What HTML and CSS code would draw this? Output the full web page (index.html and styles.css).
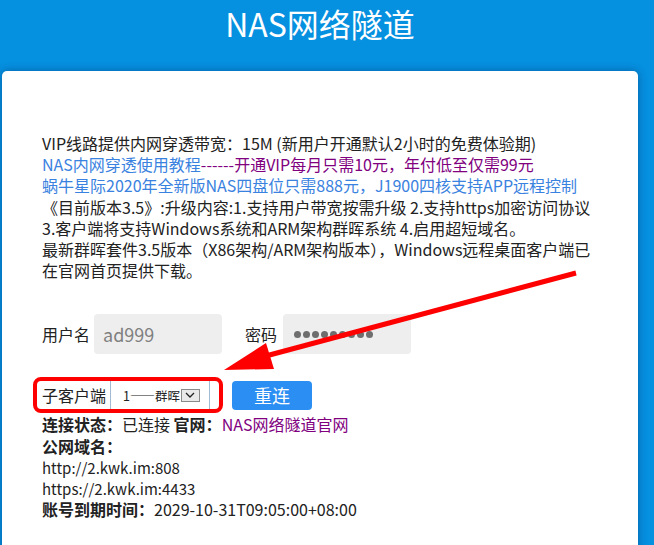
FILE: index.html
```html
<!DOCTYPE html>
<html lang="zh-CN">

<head>
    <meta charset="UTF-8">
    <meta name="viewport" content="width=device-width, initial-scale=1.0">
    <title>NAS网络隧道</title>
    <link rel="stylesheet" href="styles.css">
</head>

<body>
    <h1 class="title">NAS网络隧道</h1>

    <div class="card">
        <div class="notice">
            VIP线路提供内网穿透带宽：15M (新用户开通默认2小时的免费体验期)<br>
            <a class="blue" href="#">NAS内网穿透使用教程</a><a class="purple" href="#">------开通VIP每月只需10元，年付低至仅需99元</a><br>
            <a class="blue" href="#">蜗牛星际2020年全新版NAS四盘位只需888元，J1900四核支持APP远程控制</a><br>
            《目前版本3.5》:升级内容:1.支持用户带宽按需升级 2.支持https加密访问协议<br>
            3.客户端将支持Windows系统和ARM架构群晖系统 4.启用超短域名。<br>
            最新群晖套件3.5版本（X86架构/ARM架构版本），Windows远程桌面客户端已<br>
            在官网首页提供下载。
        </div>

        <div class="login-row">
            <label class="lbl">用户名</label>
            <input class="field" type="text" value="ad999" readonly>
            <label class="lbl pwd-lbl">密码</label>
            <div class="field pwd">
                <span></span><span></span><span></span><span></span><span></span><span></span><span></span><span></span><span></span>
            </div>
        </div>

        <div class="client-row">
            <div class="client-box">
                <span class="client-lbl">子客户端</span>
                <div class="client-select">
                    <span class="opt">1——群晖</span>
                    <span class="drop">
                        <svg width="10" height="6" viewBox="0 0 10 6"><path d="M1 1 L5 5 L9 1" fill="none" stroke="#222" stroke-width="1.3"/></svg>
                    </span>
                </div>
            </div>
            <button class="reconnect">重连</button>
        </div>

        <div class="status">
            <div><b>连接状态：</b>已连接 <b>官网：</b><a class="purple" href="#">NAS网络隧道官网</a></div>
            <div><b>公网域名：</b></div>
            <div class="url">http://2.kwk.im:808</div>
            <div class="url">https://2.kwk.im:4433</div>
            <div><b>账号到期时间：</b>2029-10-31T09:05:00+08:00</div>
        </div>
    </div>

    <!-- red arrow drawn over the page -->
    <svg class="arrow" width="654" height="545" viewBox="0 0 654 545">
        <line x1="576" y1="273" x2="262" y2="357" stroke="#f00" stroke-width="5"/>
        <polygon points="224,370 266,343 274,369" fill="#f00"/>
    </svg>
</body>

</html>
```

FILE: styles.css
```css
body {
    margin: 0;
    height: 545px;
    overflow: hidden;
    background-color: #0690e0;
    font-family: "Noto Sans CJK SC", sans-serif;
    color: #222;
    position: relative;
}

a {
    text-decoration: none;
}

.title {
    margin: 0;
    height: 71px;
    line-height: 46px;
    width: 640px;
    text-align: center;
    font-size: 32px;
    font-weight: normal;
    color: white;
}

.card {
    margin-left: 2px;
    width: 556px;
    min-height: 600px;
    padding: 62px 40px 0 40px;
    background: white;
    border-radius: 5px;
    box-shadow: 0 0 8px rgba(0, 40, 90, 0.45);
}

.notice {
    font-size: 16px;
    line-height: 21.2px;
    white-space: nowrap;
}

.blue {
    color: #3a82e0;
}

.purple {
    color: #800080;
}

.login-row {
    display: flex;
    align-items: center;
    margin-top: 33px;
}

.lbl {
    font-size: 16px;
    margin-right: 4px;
}

.pwd-lbl {
    margin-left: 23px;
    margin-right: 6px;
}

.field {
    box-sizing: border-box;
    width: 128px;
    height: 40px;
    border: none;
    border-radius: 4px;
    background-color: #eee;
    padding: 0 9px;
    font-family: inherit;
    font-size: 18px;
    color: #808080;
    outline: none;
}

.pwd {
    display: flex;
    align-items: center;
    gap: 2px;
    padding-left: 11px;
}

.pwd span {
    width: 7px;
    height: 7px;
    border-radius: 50%;
    background-color: #6e6e6e;
}

.client-row {
    display: flex;
    align-items: center;
    margin-top: 23px;
    margin-left: -9px;
}

.client-box {
    display: flex;
    align-items: stretch;
    height: 28px;
    width: 177px;
    border: 4px solid #f00;
    border-radius: 8px;
    padding-left: 5px;
}

.client-lbl {
    font-size: 16px;
    line-height: 28px;
    margin-right: 4px;
}

.client-select {
    display: flex;
    align-items: center;
    width: 100px;
    border-left: 1px solid #a3bad4;
    border-right: 1px solid #a3bad4;
    padding-left: 12px;
    box-sizing: border-box;
}

.opt {
    font-size: 12.5px;
    white-space: nowrap;
}

.drop {
    display: flex;
    align-items: center;
    justify-content: center;
    width: 17px;
    height: 11px;
    margin-left: 1px;
    border: 1px solid #8a8a8a;
    background-color: #e9e9e9;
}

.reconnect {
    margin-left: 9px;
    width: 80px;
    height: 29px;
    border: none;
    border-radius: 4px;
    background-color: #2b8ef2;
    color: white;
    font-family: inherit;
    font-size: 18px;
    padding: 0;
}

.status {
    margin-top: 1px;
    font-size: 16px;
    line-height: 21.2px;
}

.status .url {
    font-size: 15px;
}

.arrow {
    position: absolute;
    top: 0;
    left: 0;
    pointer-events: none;
}
```
